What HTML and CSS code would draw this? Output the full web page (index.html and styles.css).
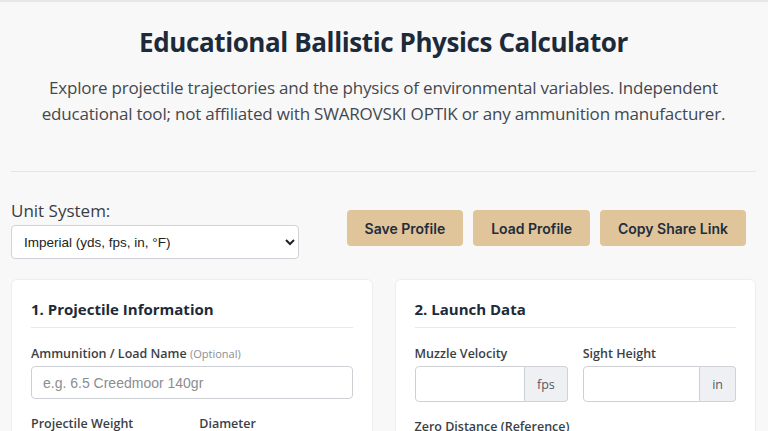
FILE: index.html
```html
<!DOCTYPE html>
<html lang="en">
<head>
<meta charset="utf-8">
<title>Educational Ballistic Physics Calculator</title>
<link rel="stylesheet" href="styles.css">
</head>
<body>
<div class="page">
  <header class="hero">
    <h1 class="hero-title">Educational Ballistic Physics Calculator</h1>
    <p class="hero-text">Explore projectile trajectories and the physics of environmental variables. Independent educational tool; not affiliated with SWAROVSKI OPTIK or any ammunition manufacturer.</p>
  </header>

  <div class="toolbar">
    <div class="unit-group">
      <label class="unit-label" for="units">Unit System:</label>
      <select id="units" class="unit-select">
        <option>Imperial (yds, fps, in, °F)</option>
        <option>Metric (m, m/s, cm, °C)</option>
      </select>
    </div>
    <div class="actions">
      <button class="btn">Save Profile</button>
      <button class="btn">Load Profile</button>
      <button class="btn">Copy Share Link</button>
    </div>
  </div>

  <div class="cards">
    <section class="card">
      <h2 class="card-title">1. Projectile Information</h2>
      <div class="field">
        <label class="field-label">Ammunition / Load Name <span class="optional">(Optional)</span></label>
        <input class="text-input" type="text" placeholder="e.g. 6.5 Creedmoor 140gr">
      </div>
      <div class="field-row">
        <div class="field">
          <label class="field-label">Projectile Weight</label>
        </div>
        <div class="field">
          <label class="field-label">Diameter</label>
        </div>
      </div>
    </section>

    <section class="card">
      <h2 class="card-title">2. Launch Data</h2>
      <div class="field-row">
        <div class="field">
          <label class="field-label">Muzzle Velocity</label>
          <div class="input-group">
            <input class="text-input grouped" type="text">
            <span class="addon">fps</span>
          </div>
        </div>
        <div class="field">
          <label class="field-label">Sight Height</label>
          <div class="input-group">
            <input class="text-input grouped" type="text">
            <span class="addon">in</span>
          </div>
        </div>
      </div>
      <div class="field">
        <label class="field-label">Zero Distance (Reference)</label>
      </div>
    </section>
  </div>
</div>
</body>
</html>
```

FILE: styles.css
```css
html, body {
  margin: 0;
  padding: 0;
}

body {
  background: #f8f8f9;
  border-top: 2px solid #e6e7e9;
  font-family: "Open Sans", "Noto Sans", sans-serif;
  color: #2b2f36;
}

.page {
  padding: 0 12px 0 11px;
}

.hero {
  text-align: center;
  padding: 22px 0 0;
  border-bottom: 1px solid #e3e5e8;
  height: 147px;
}

.hero-title {
  margin: 0;
  font-size: 26px;
  font-weight: 700;
  color: #1c2a3a;
  letter-spacing: -0.4px;
  line-height: 36px;
}

.hero-text {
  margin: 15px auto 0;
  width: 700px;
  font-size: 17px;
  line-height: 26px;
  color: #44484e;
  letter-spacing: -0.2px;
}

.toolbar {
  display: flex;
  justify-content: space-between;
  align-items: flex-start;
  padding: 28px 10px 0 0;
}

.unit-group {
  display: flex;
  flex-direction: column;
}

.unit-label {
  font-size: 17px;
  color: #3a3d42;
  line-height: 22px;
  margin-bottom: 3px;
}

.unit-select {
  width: 288px;
  height: 34px;
  border: 1px solid #cfd3d8;
  border-radius: 4px;
  background: #fff;
  font-family: "Liberation Sans", Arial, sans-serif;
  font-size: 13.5px;
  color: #222;
  padding: 0 8px;
}

.actions {
  display: flex;
  gap: 10px;
  padding-top: 10px;
}

.btn {
  height: 36px;
  padding: 0 18px;
  border: none;
  border-radius: 4px;
  background: #e0c49a;
  font-family: Inter, "Noto Sans", sans-serif;
  font-size: 14px;
  font-weight: 600;
  color: #1f2d3d;
}

.cards {
  display: grid;
  grid-template-columns: minmax(0, 1fr) minmax(0, 1fr);
  gap: 22px;
  margin-top: 20px;
}

.card {
  background: #fff;
  border: 1px solid #eceef0;
  border-radius: 6px;
  padding: 18px 19px 20px;
}

.card-title {
  margin: 0 0 17px;
  font-size: 15px;
  font-weight: 700;
  color: #1c2a3a;
  line-height: 22px;
  padding-bottom: 7px;
  border-bottom: 1px solid #e6e8eb;
}

.field {
  display: flex;
  flex-direction: column;
  min-width: 0;
  margin-bottom: 16px;
}

.field-row {
  display: grid;
  grid-template-columns: minmax(0, 1fr) minmax(0, 1fr);
  gap: 15px;
}

.field-label {
  font-size: 12.5px;
  font-weight: 600;
  color: #3b3f45;
  line-height: 18px;
  margin-bottom: 3px;
}

.optional {
  font-size: 11px;
  font-weight: 400;
  color: #8b8f95;
}

.text-input {
  width: 100%;
  height: 33px;
  box-sizing: border-box;
  border: 1px solid #ccd0d5;
  border-radius: 4px;
  padding: 0 11px;
  font-family: "Liberation Sans", Arial, sans-serif;
  font-size: 14px;
  background: #fff;
}

.text-input::placeholder {
  color: #8a8d92;
}

.input-group {
  display: flex;
}

.grouped {
  flex: 1;
  width: auto;
  min-width: 0;
  height: 36px;
  border-radius: 4px 0 0 4px;
}

.addon {
  display: flex;
  align-items: center;
  padding: 0 12px;
  background: #eef0f3;
  border: 1px solid #cfd3d8;
  border-left: none;
  border-radius: 0 4px 4px 0;
  font-size: 12.5px;
  color: #555a61;
}
```
